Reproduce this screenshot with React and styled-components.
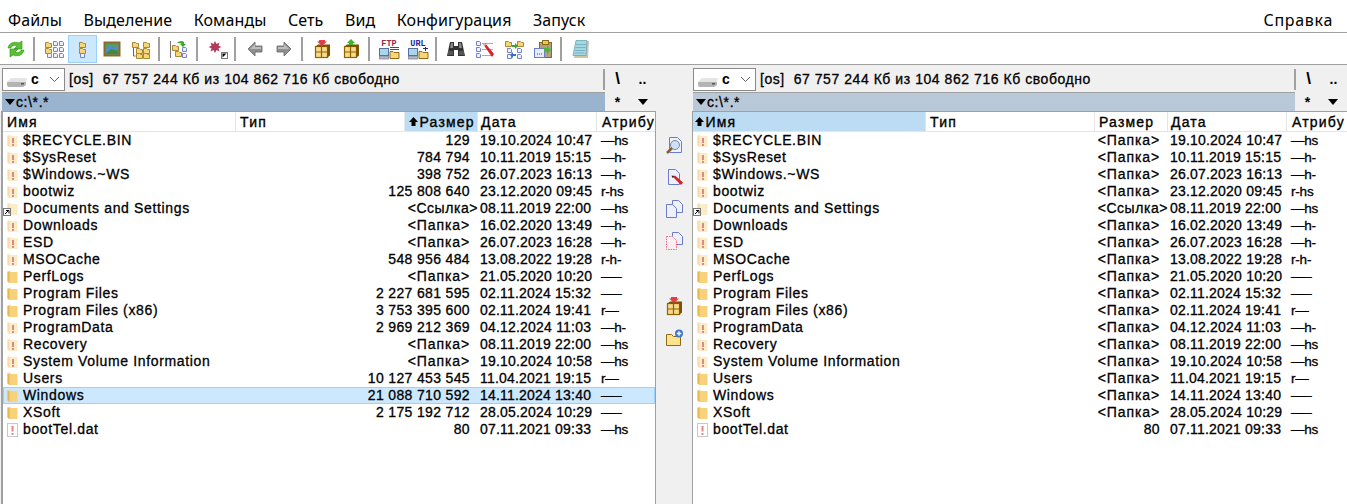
import React from 'react';
import styled, { createGlobalStyle } from 'styled-components';

const Global = createGlobalStyle`
  html, body { margin: 0; padding: 0; background: #f0f0f0; }
  body { font-family: "Liberation Sans", Arial, sans-serif; color: #000; }
`;
const Page = styled.div`
  width: 1347px; height: 504px; overflow: hidden; display: flex; flex-direction: column; background: #f0f0f0;
`;
const MenuBar = styled.nav`
  height: 33px; box-sizing: border-box; display: flex; align-items: center; gap: 21.5px; padding: 7px 14px 0 8px;
  background: #fff; font: 16px/20px "Noto Sans", sans-serif; letter-spacing: 0.1px; border-bottom: 1px solid #a0a0a0; flex: none;
`;
const MenuItem = styled.span`
  margin-left: ${p => (p.$end ? 'auto' : 0)};
  letter-spacing: ${p => (p.$end ? '0.7px' : 'inherit')};
`;
const ToolBar = styled.div`
  height: 32px; box-sizing: border-box; display: flex; align-items: center; padding: 0 0 0 1px;
  background: #fff; border-bottom: 1px solid #a0a0a0; flex: none;
`;
const ToolButton = styled.div`
  width: 29px; height: 28px; box-sizing: border-box; display: flex; align-items: center; justify-content: center;
  background: ${p => (p.$on ? '#cce8ff' : 'transparent')};
  border: 1px solid ${p => (p.$on ? '#99d1ff' : 'transparent')};
`;
const ToolSep = styled.div`
  width: 9px; height: 24px; flex: none; display: flex; justify-content: center;
  &::before { content: ""; width: 2px; background: #a0a0a0; margin-left: -1px; }
`;
const Main = styled.div`
  flex: 1; min-height: 0; display: flex;
`;
const Panel = styled.section`
  display: flex; flex-direction: column; width: ${p => p.$w}px; flex: none; padding-left: ${p => p.$pad}px; box-sizing: border-box;
`;
const DriveRow = styled.div`
  height: 27px; box-sizing: border-box; display: flex; align-items: center; padding: 1px 1px 0 0;
`;
const DriveSelect = styled.div`
  width: 63px; height: 23px; box-sizing: border-box; background: #fff; border: 1px solid #8a8a8a; flex: none;
  display: flex; align-items: center; padding-left: 3px; font-size: 14px; font-weight: 700; position: relative;
`;
const DriveLetter = styled.span` margin-left: 3px; `;
const Chevron = styled.svg` position: absolute; right: 4px; top: 7px; `;
const DriveInfo = styled.div`
  margin-left: 4px; flex: 1; font-size: 14px; letter-spacing: 0.55px; -webkit-text-stroke: 0.3px #000; white-space: pre; line-height: 20px;
`;
const Divider = styled.div`
  width: 2px; height: 21px; background: #a0a0a0; flex: none;
`;
const QuickBtn = styled.div`
  width: 25px; flex: none; text-align: center; font-size: ${p => (p.$big ? 17 : 14)}px; font-weight: 700; line-height: 16px;
  display: flex; align-items: center; justify-content: center;
`;
const PathRow = styled.div`
  height: 19px; display: flex; align-items: stretch;
`;
const PathBar = styled.div`
  flex: 1; box-sizing: border-box; background: ${p => (p.$active ? '#9ab4d0' : '#b9c9d9')}; border-top: 1px solid #a0a0a0;
  display: flex; align-items: center; gap: 1px; padding-left: 3px; font-size: 14px; letter-spacing: 0.6px; -webkit-text-stroke: 0.3px #000;
`;
const Triangle = styled.span`
  width: 0; height: 0; border-left: 5.5px solid transparent; border-right: 5.5px solid transparent; border-top: 6px solid #000;
`;
const PathTools = styled.div`
  display: flex; width: ${p => p.$w}px; flex: none;
`;
const ListFrame = styled.div`
  flex: 1; min-height: 0; background: #fff; border-top: 1px solid #a0a0a0; border-left: ${p => p.$bw}px solid #a0a0a0;
  border-right: ${p => (p.$closed ? '1px solid #a0a0a0' : 'none')}; margin-left: ${p => p.$ml}px; overflow: hidden;
`;
const columns = '233px 169px 73px 119px 62px';
const Header = styled.div`
  display: grid; grid-template-columns: ${columns}; height: 20px; box-sizing: border-box; border-bottom: 1px solid #e5e5e5;
  font-size: 14px; -webkit-text-stroke: 0.35px #000; letter-spacing: 1.2px;
`;
const HeadCell = styled.div`
  display: flex; align-items: center; padding-left: ${p => p.$pad ?? 4}px; gap: 1.5px; white-space: nowrap; overflow: hidden;
  border-right: 1px solid #e5e5e5;
  background: ${p => (p.$sorted ? '#bcdcf4' : 'transparent')};
`;
const Row = styled.div`
  display: grid; grid-template-columns: ${columns}; height: 17px; box-sizing: border-box; align-items: center;
  font-size: 14px; letter-spacing: 0.65px; -webkit-text-stroke: 0.3px #000; line-height: 15px; white-space: nowrap;
  background: ${p => (p.$selected ? '#cce8ff' : 'transparent')};
  outline: ${p => (p.$selected ? '1px solid #99d1ff' : 'none')}; outline-offset: -1px;
`;
const NameCell = styled.div`
  display: flex; align-items: center; padding-left: 4px; gap: 5px; position: relative;
`;
const SizeCell = styled.div`
  display: flex; justify-content: flex-end; min-width: 0;
  padding-right: ${p => (p.$kind === 'link' ? 0 : 8)}px;
  letter-spacing: ${p => (p.$kind === 'num' ? 0.35 : p.$kind === 'dir' ? 0.9 : 0.55)}px;
`;
const DateCell = styled.div` padding-left: 2px; letter-spacing: 0.2px; `;
const AttrCell = styled.div` padding-left: 4px; font-size: 13.5px; letter-spacing: -0.2px; `;
const Cell = styled.div``;
const LinkBadge = styled.svg` position: absolute; left: 0; top: 7px; `;
const Center = styled.aside`
  width: 36px; flex: none; display: flex; flex-direction: column; align-items: center; padding-top: 69px; gap: 10px;
`;
const CenterBtn = styled.div`
  height: 22px; display: flex; align-items: center; justify-content: center; margin-top: ${p => p.$mt ?? 0}px;
`;

const Fold = ({ x, y, s = 1 }) => (
  <g transform={`translate(${x} ${y}) scale(${s})`}>
    <path d="M.5 1.5h3l1 1h2v4h-6z" fill="#f6d67c" stroke="#a8892f" strokeWidth="1" />
  </g>
);
const Doc = ({ x, y }) => (
  <path d={`M${x + .5} ${y + .5}h3l1 1v3h-4z`} fill="#eef0fb" stroke="#7282cc" />
);
const I = ({ children, w = 20, h = 20 }) => <svg width={w} height={h} viewBox={`0 0 ${w} ${h}`}>{children}</svg>;

const Refresh = () => <I>
  <path d="M2 9c1-5 6-7 11-5l3-2v8h-8l3-3c-3-1-6 0-6 2z" fill="#58c233" stroke="#2f8f18" strokeWidth=".6" />
  <path d="M18 11c-1 5-6 7-11 5l-3 2v-8h8l-3 3c3 1 6 0 6-2z" fill="#58c233" stroke="#2f8f18" strokeWidth=".6" />
</I>;
const Brief = () => <I>
  <Fold x={1} y={2} /><Fold x={1} y={8} /><Doc x={3} y={14} /><Doc x={9} y={2} /><Doc x={9} y={8} /><Doc x={9} y={14} /><Doc x={15} y={2} /><Doc x={15} y={8} /><Doc x={15} y={14} />
</I>;
const Single = () => <I>
  <Fold x={6} y={2} /><Fold x={6} y={8} /><Doc x={7} y={14} />
</I>;
const Thumb = () => <I>
  <rect x="2.5" y="3.5" width="15" height="13" fill="#5a9a62" stroke="#8b6a32" strokeWidth="2" />
  <path d="M4 10l4-4 4 3 4-3v4l-12 4z" fill="#4e8fd0" /><path d="M4 14l5-4 7 2v3H4z" fill="#3f8a3f" />
</I>;
const Tree = () => <I>
  <Fold x={1} y={2} /><Fold x={5} y={8} /><Fold x={5} y={13} /><Fold x={12} y={2} /><Fold x={12} y={8} /><Fold x={12} y={13} />
  <path d="M2.5 9v8h2" fill="none" stroke="#666" />
</I>;
const Sync = () => <I>
  <path d="M1.5 2v17" stroke="#777" /><Fold x={3} y={5} /><Fold x={6} y={11} />
  <Doc x={13} y={8} /><Doc x={13} y={14} />
  <path d="M8 4c2-2 5-3 7-1v2h2l-3 3-3-3h2c-1-1-3-1-5-1z" fill="#37a82a" />
</I>;
const Star = () => <I w={22} h={20}>
  <path d="M9 2l1.5 3 3-1.5-1 3.2 3 1.3-3 1.3 1 3.2-3-1.500L9 14l-1.500-3-3 1.500 1-3.200-3-1.300 3-1.300-1-3.200 3 1.500z" fill="#b23a5a" />
  <rect x="15.500" y="13.500" width="6" height="6" fill="#fff" stroke="#777" /><path d="M16.500 18.500v-4h4z" fill="#000" />
</I>;
const Arrow = ({ flip }) => <I>
  <g transform={flip ? 'matrix(-1 0 0 1 20 0)' : undefined}>
    <path d="M3 10l7-7v4h7v6h-7v4z" fill="#8f8f8f" stroke="#666" strokeWidth=".8" />
    <path d="M5 10l5-5v3h6v2z" fill="#bdbdbd" />
  </g>
</I>;
const Box = ({ color = '#e23c4e', up }) => <I>
  <rect x="3.500" y="7.500" width="12" height="11" fill="#f7d98a" stroke="#8f6400" strokeWidth="1.200" />
  <path d="M3.500 13h12M9.500 7.500v11" stroke="#8f6400" strokeWidth="1.200" />
  <path d="M15.500 7.500l2.500-2v11l-2.500 2zM3.500 7.500l2.500-2h12l-2.500 2z" fill="#7a5200" />
  <path d={up ? 'M10 0l4 4h-2v2H8V4H6z' : 'M7 1h6v1.500h2L10 7 5 2.500h2z'} fill={color} />
</I>;
const Net = ({ label, color, plus }) => <I w={22} h={22}>
  <text x="11" y="7.500" textAnchor="middle" fontFamily="Liberation Mono, monospace" fontWeight="700" fontSize="8.500" fill={color}>{label}</text>
  <rect x="1.500" y="10.500" width="9" height="7" fill="#a8d8e8" stroke="#5a70a0" />
  <rect x="1.500" y="18" width="9" height="3" fill="#b8b8b8" stroke="#5a70a0" strokeWidth=".6" />
  <path d="M12 13.500h3l1 1h5v6h-9z" fill="#f6d67c" stroke="#8f6a14" />
  <path d={plus ? 'M16 10.500h5M18.500 9v4' : 'M12 9.500h9M12 11.500h9'} stroke={color} strokeWidth="1" />
</I>;
const Binoc = () => <I>
  <path d="M4 3h4v4h4V3h4l3 14h-7V11H8v6H1z" fill="#333" /><path d="M5 4h2v5H4zM13 4h2l1 5h-3z" fill="#888" />
  <rect x="2" y="12" width="5" height="4" fill="#555" /><rect x="13" y="12" width="5" height="4" fill="#555" />
</I>;
const EditList = () => <I>
  <Doc x={1} y={2} /><Doc x={1} y={8} /><Doc x={1} y={14} />
  <path d="M7 4.500h11M7 10.500h11M7 16.500h11" stroke="#aaa" />
  <path d="M8 5l2-1 9 11-2 3z" fill="#d8202c" /><path d="M8 5l2-1 1 2-2 1z" fill="#e8c090" />
</I>;
const Compare = () => <I>
  <Fold x={1} y={1} /><Fold x={13} y={1} /><Doc x={3} y={9} /><Doc x={13} y={9} /><Doc x={3} y={15} /><Doc x={13} y={15} />
  <path d="M8 6h3V4l3 3-3 3V8H8z" fill="#3aa52e" /><path d="M12 15H9v-2l-3 3 3 3v-2h3z" fill="#3570c8" />
</I>;
const Clip = () => <I>
  <rect x="6.500" y="3.500" width="12" height="15" fill="#b0a080" stroke="#7a6a48" />
  <rect x="9.500" y="1.500" width="6" height="4" fill="#f0c850" stroke="#8f6a14" />
  <rect x="1.500" y="9.500" width="10" height="9" fill="#e8ecfa" stroke="#6b7cc8" />
  <path d="M11 9h3V7l4 4-4 4v-2h-3z" fill="#4cb83a" />
  <path d="M4 15h1M6 15h1M8 15h1" stroke="#445" />
</I>;
const Note = () => <I>
  <path d="M6 2h12l-1 17H3z" fill="#cfc4a8" /><path d="M5 1.500h11l-1 15H2z" fill="#a5d7e2" stroke="#6aa6b6" strokeWidth=".8" />
  <path d="M5 5.500h10M4.500 8.500h10M4 11.500h10M3.500 14h10" stroke="#78b4c4" />
</I>;

const DocBig = ({ x = 4, y = 2, w = 13, h = 16, fill = '#eef1fb', stroke = '#6b7cc8', dash }) => (
  <path d={`M${x + .5} ${y + .5}h${w - 5}l4 4v${h - 5}h-${w - 1}z`} fill={fill} stroke={stroke} strokeDasharray={dash} />
);
const ViewDoc = () => <I>
  <DocBig x={5} /><circle cx="11" cy="10" r="4.500" fill="#cfe0f4" stroke="#7a8a9a" />
  <path d="M8 13l-5 5" stroke="#8a5a3a" strokeWidth="2.500" />
</I>;
const EditDoc = () => <I>
  <DocBig x={4} w={12} />
  <path d="M9 10l2-1.500 8 7-2 2.500z" fill="#d8202c" /><path d="M7.500 8.500l3 .5-2 2z" fill="#222" />
</I>;
const CopyDoc = () => <I>
  <DocBig x={8} y={1} w={11} h={13} /><DocBig x={2} y={5} w={11} h={14} />
</I>;
const MoveDoc = () => <I>
  <DocBig x={8} y={1} w={11} h={13} /><DocBig x={2} y={5} w={11} h={14} fill="#fdeef2" stroke="#ee6688" dash="1.500 1" />
</I>;
const NewFolder = () => <I>
  <path d="M2.500 6.500h5l2 2h7v9h-14z" fill="#fbe28e" stroke="#8f6a14" />
  <circle cx="15" cy="5.500" r="4" fill="#3f78c8" /><path d="M12.800 5.500h4.400M15 3.300v4.400" stroke="#fff" strokeWidth="1.300" />
</I>;

const FolderIcon = ({ pale, hiddenMark }) => (
  <svg width="11" height="14" viewBox="0 0 11 14" style={{ flex: 'none' }}>
    <path d="M.5 1.500l3-1v1.500h7v11H2.500L.5 11.500z" fill={pale ? '#fbecc8' : '#f7d27a'} />
    <path d="M.5 1.500v10L2.500 13V2.500z" fill={pale ? '#f3dcaa' : '#e8b84e'} />
    {hiddenMark && <path d="M5 4h2v5H5zM5 10h2v2H5z" fill="#e08888" />}
  </svg>
);
const FileIcon = () => (
  <svg width="11" height="14" viewBox="0 0 11 14" style={{ flex: 'none' }}>
    <rect x=".5" y=".5" width="10" height="13" fill="#fff" stroke="#c8c8c8" />
    <path d="M4.500 3h2v5.500h-2zM4.500 10h2v2h-2z" fill="#e08888" />
  </svg>
);

const DATA = [
  ['$RECYCLE.BIN', '129', '19.10.2024 10:47', '—hs', 'h'],
  ['$SysReset', '784 794', '10.11.2019 15:15', '—h-', 'h'],
  ['$Windows.~WS', '398 752', '26.07.2023 16:13', '—h-', 'h'],
  ['bootwiz', '125 808 640', '23.12.2020 09:45', 'r-hs', 'h'],
  ['Documents and Settings', '<Ссылка>', '08.11.2019 22:00', '—hs', 'l'],
  ['Downloads', '<Папка>', '16.02.2020 13:49', '—h-', 'h'],
  ['ESD', '<Папка>', '26.07.2023 16:28', '—h-', 'h'],
  ['MSOCache', '548 956 484', '13.08.2022 19:28', 'r-h-', 'h'],
  ['PerfLogs', '<Папка>', '21.05.2020 10:20', '—–', 'd'],
  ['Program Files', '2 227 681 595', '02.11.2024 15:32', '—–', 'd'],
  ['Program Files (x86)', '3 753 395 600', '02.11.2024 19:41', 'r—', 'd'],
  ['ProgramData', '2 969 212 369', '04.12.2024 11:03', '—h-', 'h'],
  ['Recovery', '<Папка>', '08.11.2019 22:00', '—hs', 'h'],
  ['System Volume Information', '<Папка>', '19.10.2024 10:58', '—hs', 'h'],
  ['Users', '10 127 453 545', '11.04.2021 19:15', 'r—', 'd'],
  ['Windows', '21 088 710 592', '14.11.2024 13:40', '—–', 'd'],
  ['XSoft', '2 175 192 712', '28.05.2024 10:29', '—–', 'd'],
  ['bootTel.dat', '80', '07.11.2021 09:33', '—hs', 'f'],
];

const DriveIcon = () => (
  <svg width="22" height="14" viewBox="0 0 22 14" style={{ marginTop: 4, flex: 'none' }}>
    <path d="M1 8l4-4h16l-1 4z" fill="#e4e4e4" />
    <path d="M1 8h19v3l-3 2H2l-1-2z" fill="#b4b4b4" /><rect x="15" y="9" width="3" height="1.500" fill="#555" />
  </svg>
);
const Up = () => <svg width="9" height="11" viewBox="0 0 9 11" style={{ flex: 'none' }}><path d="M4.500 1l4.500 5H6.500v4h-4V6H0z" fill="#000" /></svg>;

const sizeKind = s => (s === '<Ссылка>' ? 'link' : s === '<Папка>' ? 'dir' : 'num');

function FilePanel({ width, pad, ml, bw, closed, active, sort, folderSizes, pathTools }) {
  return (
    <Panel $w={width} $pad={pad}>
      <DriveRow>
        <DriveSelect>
          <DriveIcon /><DriveLetter>c</DriveLetter>
          <Chevron width="11" height="7" viewBox="0 0 11 7"><path d="M1 1l4.500 4.500L10 1" fill="none" stroke="#606060" /></Chevron>
        </DriveSelect>
        <DriveInfo>[os]  67 757 244 Кб из 104 862 716 Кб свободно</DriveInfo>
        <Divider />
        <QuickBtn $big>\</QuickBtn>
        <QuickBtn>..</QuickBtn>
      </DriveRow>
      <PathRow>
        <PathBar $active={active}><Triangle />c:\*.*</PathBar>
        <PathTools $w={pathTools}>
          <QuickBtn>*</QuickBtn>
          <QuickBtn><Triangle /></QuickBtn>
        </PathTools>
      </PathRow>
      <ListFrame $ml={ml} $bw={bw} $closed={closed}>
        <Header>
          <HeadCell $sorted={sort === 'name'} $pad={sort === 'name' ? 2 : 4}>{sort === 'name' && <Up />}Имя</HeadCell>
          <HeadCell>Тип</HeadCell>
          <HeadCell $sorted={sort === 'size'} $pad={4}>{sort === 'size' && <Up />}Размер</HeadCell>
          <HeadCell $pad={3}>Дата</HeadCell>
          <HeadCell $pad={5}>Атрибу</HeadCell>
        </Header>
        {DATA.map(([name, size, date, attr, kind]) => {
          const shown = folderSizes && kind !== 'f' ? (kind === 'l' ? '<Ссылка>' : '<Папка>') : size;
          return (
            <Row key={name} $selected={active && name === 'Windows'}>
              <NameCell>
                {kind === 'f' ? <FileIcon /> : <FolderIcon pale={kind !== 'd'} hiddenMark={kind === 'h'} />}
                {kind === 'l' && (
                  <LinkBadge width="8" height="8" viewBox="0 0 8 8">
                    <rect x=".5" y=".5" width="7" height="7" fill="#fff" stroke="#777" /><path d="M2 6l3-3M3 2.500h3v3" stroke="#000" fill="none" />
                  </LinkBadge>
                )}
                {name}
              </NameCell>
              <Cell />
              <SizeCell $kind={sizeKind(shown)}>{shown}</SizeCell>
              <DateCell>{date}</DateCell>
              <AttrCell>{attr}</AttrCell>
            </Row>
          );
        })}
      </ListFrame>
    </Panel>
  );
}

const TOOLS = [
  [<Refresh />], 0, [<Brief />], [<Single />, true], [<Thumb />], [<Tree />], 0, [<Sync />], 0, [<Star />], 0,
  [<Arrow />], [<Arrow flip />], 0, [<Box />], [<Box color="#3fb52e" up />], 0,
  [<Net label="FTP" color="#9a2a48" />], [<Net label="URL" color="#1c2c9c" plus />], 0,
  [<Binoc />], [<EditList />], [<Compare />], [<Clip />], 0, [<Note />],
];

export default function App() {
  return (
    <Page>
      <Global />
      <MenuBar>
        {['Файлы', 'Выделение', 'Команды', 'Сеть', 'Вид', 'Конфигурация', 'Запуск'].map(m => <MenuItem key={m}>{m}</MenuItem>)}
        <MenuItem $end>Справка</MenuItem>
      </MenuBar>
      <ToolBar>
        {TOOLS.map((t, i) => t === 0 ? <ToolSep key={i} /> : <ToolButton key={i} $on={t[1]}>{t[0]}</ToolButton>)}
      </ToolBar>
      <Main>
        <FilePanel width={656} pad={2} ml={-1} bw={2} closed active sort="size" pathTools={51} />
        <Center>
          <CenterBtn><ViewDoc /></CenterBtn>
          <CenterBtn><EditDoc /></CenterBtn>
          <CenterBtn><CopyDoc /></CenterBtn>
          <CenterBtn><MoveDoc /></CenterBtn>
          <CenterBtn $mt={33}><Box /></CenterBtn>
          <CenterBtn><NewFolder /></CenterBtn>
        </Center>
        <FilePanel width={655} pad={1} ml={-1} bw={1} sort="name" folderSizes pathTools={52} />
      </Main>
    </Page>
  );
}
